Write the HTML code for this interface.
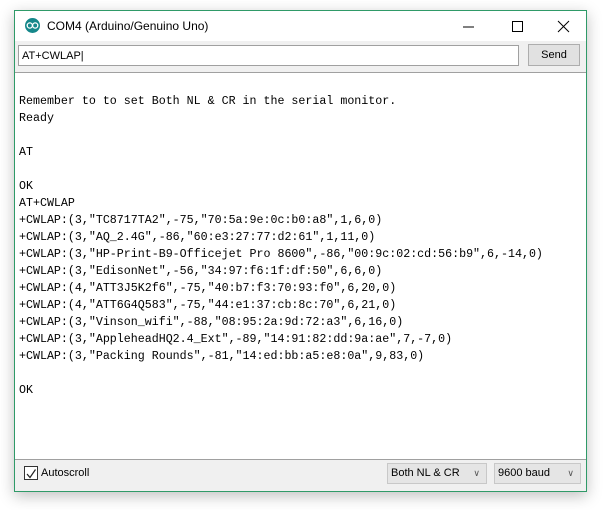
<!DOCTYPE html>
<html><head><style>
body{margin:0;width:611px;height:510px;background:#fff;position:relative;overflow:hidden;font-family:"Liberation Sans",sans-serif}
.win{position:absolute;left:14px;top:10px;width:571px;height:480px;border:1px solid #2f9a68;background:#f0f0f0;box-shadow:0 4px 14px rgba(0,0,0,.25)}
.title{position:absolute;left:0;top:0;width:571px;height:30px;background:#fff;font-size:12px;color:#000}
.title .t{position:absolute;left:32px;top:8px}
.logo{position:absolute;left:10px;top:7px;width:15px;height:15px;border-radius:50%;background:#15878a}
.tb{position:absolute;left:3px;top:34px;width:501px;height:21px;background:#fff;border:1px solid #a0a0a0;font-size:11px;line-height:21px;padding-left:3px;box-sizing:border-box}
.send{position:absolute;left:513px;top:33px;width:52px;height:22px;background:#e1e1e1;border:1px solid #adadad;box-sizing:border-box;font-size:11px;text-align:center;line-height:20px}
.out{position:absolute;left:0;top:61px;width:571px;height:388px;background:#fff;border-top:1px solid #a0a0a0;border-bottom:1px solid #a0a0a0;box-sizing:border-box}
pre{margin:0;position:absolute;left:4px;top:3px;font-family:"Liberation Mono",monospace;font-size:11.65px;line-height:17px;color:#000}
.cb{position:absolute;left:9px;top:455px;width:12px;height:12px;border:1px solid #333;background:#fff}
.dd{position:absolute;top:452px;height:21px;background:#e5e5e5;border:1px solid #c8c8c8;box-sizing:border-box;font-size:11px;line-height:19px;padding-left:3px}
.dd span{position:absolute;right:6px;top:0;color:#555;font-size:9px}
</style></head><body>
<div class="win">
 <div class="title"><div class="logo"><svg width="15" height="15"><circle cx="4.8" cy="7.5" r="2.6" fill="none" stroke="#fff" stroke-width="1.3"/><circle cx="10.2" cy="7.5" r="2.6" fill="none" stroke="#fff" stroke-width="1.3"/></svg></div><span class="t">COM4 (Arduino/Genuino Uno)</span>
 <svg style="position:absolute;left:440px;top:8px" width="130" height="16"><line x1="8" y1="8" x2="19" y2="8" stroke="#000"/><rect x="57.5" y="2.5" width="10" height="10" fill="none" stroke="#000"/><path d="M103 2L114 13M114 2L103 13" stroke="#000"/></svg></div>
 <div class="tb">AT+CWLAP|</div>
 <div class="send">Send</div>
 <div class="out"><pre>

Remember to to set Both NL &amp; CR in the serial monitor.
Ready

AT

OK
AT+CWLAP
+CWLAP:(3,"TC8717TA2",-75,"70:5a:9e:0c:b0:a8",1,6,0)
+CWLAP:(3,"AQ_2.4G",-86,"60:e3:27:77:d2:61",1,11,0)
+CWLAP:(3,"HP-Print-B9-Officejet Pro 8600",-86,"00:9c:02:cd:56:b9",6,-14,0)
+CWLAP:(3,"EdisonNet",-56,"34:97:f6:1f:df:50",6,6,0)
+CWLAP:(4,"ATT3J5K2f6",-75,"40:b7:f3:70:93:f0",6,20,0)
+CWLAP:(4,"ATT6G4Q583",-75,"44:e1:37:cb:8c:70",6,21,0)
+CWLAP:(3,"Vinson_wifi",-88,"08:95:2a:9d:72:a3",6,16,0)
+CWLAP:(3,"AppleheadHQ2.4_Ext",-89,"14:91:82:dd:9a:ae",7,-7,0)
+CWLAP:(3,"Packing Rounds",-81,"14:ed:bb:a5:e8:0a",9,83,0)

OK</pre></div>
 <div class="cb"><svg width="12" height="12"><path d="M2 6L5 9.5L10.5 1.5" fill="none" stroke="#222" stroke-width="1.2"/></svg></div>
 <div style="position:absolute;left:26px;top:456px;font-size:11px">Autoscroll</div>
 <div class="dd" style="left:372px;width:100px">Both NL &amp; CR<span>∨</span></div>
 <div class="dd" style="left:479px;width:87px">9600 baud<span>∨</span></div>
</div>
</body></html>
